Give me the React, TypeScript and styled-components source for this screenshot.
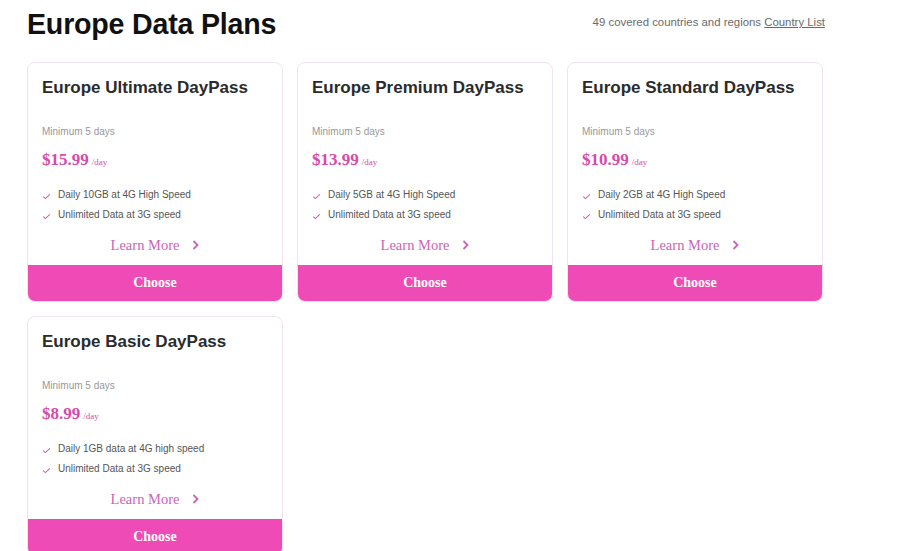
import React from "react";
import styled, { createGlobalStyle } from "styled-components";

const GlobalStyle = createGlobalStyle`
  body {
    margin: 0;
    background: #fff;
    font-family: "Liberation Sans", Arial, sans-serif;
  }
`;

const Page = styled.div`
  padding: 6px 0 0 27px;
  width: 798px;
`;

const Header = styled.div`
  display: flex;
  justify-content: space-between;
  align-items: center;
  height: 34px;
  margin-bottom: 22px;
`;

const Title = styled.h1`
  margin: 2px 0 0 0;
  font-size: 28.6px;
  font-weight: 700;
  color: #111;
  letter-spacing: -0.2px;
`;

const Covered = styled.div`
  font-size: 11.4px;
  color: #6a6a6a;
  margin-top: -2px;
  a {
    color: #6a6a6a;
    text-decoration: underline;
  }
`;

const Grid = styled.div`
  display: grid;
  grid-template-columns: repeat(3, 256px);
  column-gap: 14px;
  row-gap: 14px;
`;

const Card = styled.div`
  border: 1px solid #f1e4ee;
  border-radius: 8px;
  overflow: hidden;
  display: flex;
  flex-direction: column;
  background: #fff;
`;

const Body = styled.div`
  padding: 14px 14px 0 14px;
`;

const PlanName = styled.h2`
  margin: 0;
  font-size: 17px;
  font-weight: 600;
  color: #2b2b2b;
  line-height: 22px;
`;

const Minimum = styled.div`
  margin-top: 27px;
  font-size: 10px;
  color: #999;
`;

const Price = styled.div`
  margin-top: 12px;
  font-family: "Liberation Serif", "Times New Roman", serif;
  color: #d64ba9;
  font-size: 17px;
  font-weight: 700;
  line-height: 22px;
  span {
    font-size: 9px;
    font-weight: 400;
    margin-left: 3px;
  }
`;

const Features = styled.ul`
  list-style: none;
  margin: 15px 0 0 0;
  padding: 0;
  display: flex;
  flex-direction: column;
  gap: 6px;
`;

const Feature = styled.li`
  display: flex;
  align-items: center;
  gap: 7px;
  font-size: 10px;
  color: #555;
  line-height: 14px;
`;

const LearnMore = styled.a`
  display: flex;
  justify-content: center;
  align-items: center;
  gap: 13px;
  margin: 14px 0 11px;
  font-family: "Liberation Serif", "Times New Roman", serif;
  font-size: 14.5px;
  color: #c965b7;
  text-decoration: none;
  line-height: 18px;
`;

const ChooseButton = styled.button`
  height: 36px;
  border: none;
  background: #ee4bb6;
  color: #fff;
  font-family: "Liberation Serif", "Times New Roman", serif;
  font-weight: 700;
  font-size: 14px;
  cursor: pointer;
  padding: 0;
`;

const Check = () => (
  <svg width="9" height="7" viewBox="0 0 9 7" fill="none" style={{ marginTop: 2 }}>
    <path d="M1.2 3.6 L3.4 5.6 L7.8 1.4" stroke="#d25fae" strokeWidth="1.1" />
  </svg>
);

const Chevron = () => (
  <svg width="7" height="10" viewBox="0 0 7 10" fill="none">
    <path d="M1.5 1 L5.5 5 L1.5 9" stroke="#c965b7" strokeWidth="1.8" />
  </svg>
);

interface Plan {
  name: string;
  price: string;
  features: string[];
}

const plans: Plan[] = [
  { name: "Europe Ultimate DayPass", price: "$15.99", features: ["Daily 10GB at 4G High Speed", "Unlimited Data at 3G speed"] },
  { name: "Europe Premium DayPass", price: "$13.99", features: ["Daily 5GB at 4G High Speed", "Unlimited Data at 3G speed"] },
  { name: "Europe Standard DayPass", price: "$10.99", features: ["Daily 2GB at 4G High Speed", "Unlimited Data at 3G speed"] },
  { name: "Europe Basic DayPass", price: "$8.99", features: ["Daily 1GB data at 4G high speed", "Unlimited Data at 3G speed"] },
];

const PlanCard = ({ plan }: { plan: Plan }) => (
  <Card>
    <Body>
      <PlanName>{plan.name}</PlanName>
      <Minimum>Minimum 5 days</Minimum>
      <Price>
        {plan.price}
        <span>/day</span>
      </Price>
      <Features>
        {plan.features.map(f => (
          <Feature key={f}>
            <Check />
            {f}
          </Feature>
        ))}
      </Features>
      <LearnMore href="#">
        Learn More <Chevron />
      </LearnMore>
    </Body>
    <ChooseButton>Choose</ChooseButton>
  </Card>
);

export default function App() {
  return (
    <>
      <GlobalStyle />
      <Page>
        <Header>
          <Title>Europe Data Plans</Title>
          <Covered>
            49 covered countries and regions <a href="#">Country List</a>
          </Covered>
        </Header>
        <Grid>
          {plans.map(p => (
            <PlanCard key={p.name} plan={p} />
          ))}
        </Grid>
      </Page>
    </>
  );
}
